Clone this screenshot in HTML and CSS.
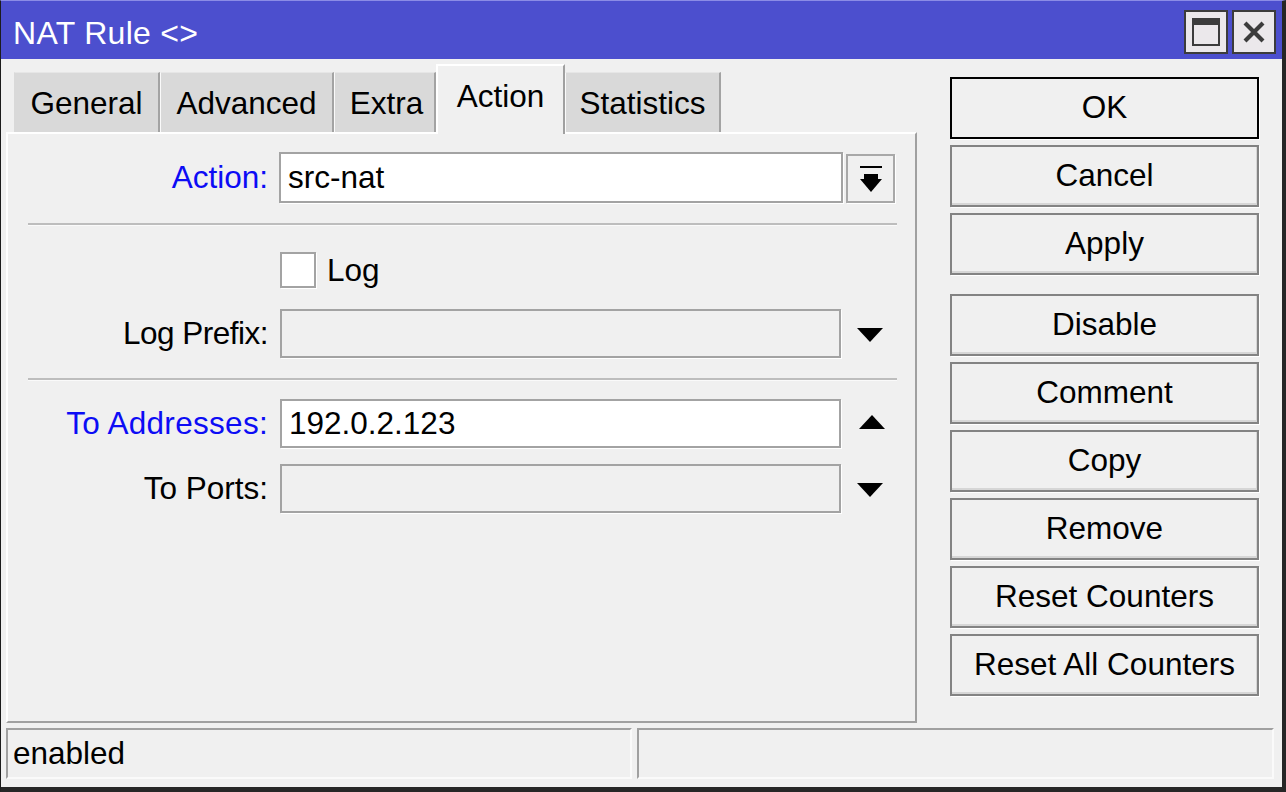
FILE: index.html
```html
<!DOCTYPE html>
<html>
<head>
<meta charset="utf-8">
<title>NAT Rule</title>
<link rel="stylesheet" href="styles.css">
</head>
<body>
<div class="window">
  <div class="titlebar">
    <div class="title">NAT Rule &lt;&gt;</div>
    <div class="tbtns">
      <div class="tbtn">
        <svg width="28" height="28" viewBox="0 0 28 28"><rect x="0" y="0" width="28" height="28" fill="#3c3c3c"/><rect x="2" y="7" width="24" height="19" fill="#ebe8eb"/></svg>
      </div>
      <div class="tbtn">
        <svg width="22" height="22" viewBox="0 0 22 22"><path d="M2 2 L20 20 M20 2 L2 20" stroke="#3c3c3c" stroke-width="4.2" fill="none"/></svg>
      </div>
    </div>
  </div>
  <div class="main">
    <div class="leftpane">
      <div class="tabs">
        <div class="tab w-general">General</div>
        <div class="tab w-advanced">Advanced</div>
        <div class="tab w-extra">Extra</div>
        <div class="tab active w-action">Action</div>
        <div class="tab w-stats">Statistics</div>
      </div>
      <div class="panel">
        <div class="row r-action">
          <div class="label blue">Action:</div>
          <div class="input wide white">src-nat</div>
          <div class="ddbtn">
            <svg width="22" height="26" viewBox="0 0 22 26"><rect x="0" y="0" width="22" height="2" fill="#000"/><rect x="4" y="8" width="14" height="6" fill="#000"/><polygon points="0,13 22,13 11,26" fill="#000"/></svg>
          </div>
        </div>
        <div class="sep s1"></div>
        <div class="row r-log">
          <div class="label"></div>
          <div class="checkbox"></div>
          <div class="cblabel">Log</div>
        </div>
        <div class="row r-prefix">
          <div class="label">Log Prefix:</div>
          <div class="input"></div>
          <div class="arrow"><svg width="26" height="14" viewBox="0 0 26 14"><polygon points="0,0 26,0 13,14" fill="#000"/></svg></div>
        </div>
        <div class="sep s2"></div>
        <div class="row r-addr">
          <div class="label blue">To Addresses:</div>
          <div class="input white">192.0.2.123</div>
          <div class="arrow up"><svg width="26" height="14" viewBox="0 0 26 14"><polygon points="0,14 26,14 13,0" fill="#000"/></svg></div>
        </div>
        <div class="row r-ports">
          <div class="label">To Ports:</div>
          <div class="input"></div>
          <div class="arrow"><svg width="26" height="14" viewBox="0 0 26 14"><polygon points="0,0 26,0 13,14" fill="#000"/></svg></div>
        </div>
      </div>
    </div>
    <div class="buttons">
      <div class="btn default">OK</div>
      <div class="btn">Cancel</div>
      <div class="btn">Apply</div>
      <div class="btn gap">Disable</div>
      <div class="btn">Comment</div>
      <div class="btn">Copy</div>
      <div class="btn">Remove</div>
      <div class="btn">Reset Counters</div>
      <div class="btn">Reset All Counters</div>
    </div>
  </div>
  <div class="statusbar">
    <div class="status s-left">enabled</div>
    <div class="status s-right"></div>
  </div>
</div>
</body>
</html>
```

FILE: styles.css
```css
html, body {
  margin: 0;
  padding: 0;
  background: #2a2a2a;
}
body {
  font-family: "Liberation Sans", Arial, sans-serif;
  font-size: 31.5px;
  color: #000;
}
.window {
  box-sizing: border-box;
  width: 1286px;
  height: 792px;
  background: #f0f0f0;
  border-left: 1px solid #1c1c1c;
  border-top: 1px solid #8b8ce6;
  border-right: 4px solid #262626;
  border-bottom: 5px solid #262626;
  display: flex;
  flex-direction: column;
}
.titlebar {
  height: 58px;
  background: #4c4fce;
  display: flex;
  align-items: flex-start;
  flex-shrink: 0;
}
.title {
  color: #fff;
  padding-left: 12px;
  margin-top: 14px;
  line-height: 36px;
  font-size: 32px;
  letter-spacing: 0.3px;
}
.tbtns {
  margin-left: auto;
  display: flex;
  gap: 4px;
  margin-top: 9px;
  margin-right: 6px;
}
.tbtn {
  box-sizing: border-box;
  width: 44px;
  height: 44px;
  background: #ebe8eb;
  border: 2px solid #3c3c3c;
  display: flex;
  align-items: center;
  justify-content: center;
}
.main {
  display: flex;
  height: 664px;
  flex-shrink: 0;
}
.leftpane {
  padding-left: 5px;
  width: 911px;
}
.tabs {
  height: 73px;
  padding-left: 8px;
  display: flex;
  align-items: flex-end;
  position: relative;
  z-index: 2;
}
.tab {
  box-sizing: border-box;
  height: 60px;
  background: #d9d9d9;
  border-left: 1px solid #fafafa;
  border-top: 1px solid #e6e6e6;
  border-right: 2px solid #a3a3a3;
  display: flex;
  align-items: center;
  justify-content: center;
  padding-top: 1px;
  white-space: nowrap;
}
.tab.active {
  height: 70px;
  margin-bottom: -2px;
  background: #f0f0f0;
  border-left: 2px solid #fff;
  border-top: 2px solid #fff;
  border-right: 2px solid #a0a0a0;
  padding-bottom: 8px;
}
.w-general { width: 146px; border-left-color: #d9d9d9; }
.w-advanced { width: 174px; }
.w-extra { width: 102px; padding-left: 4px; }
.w-action { width: 129px; }
.w-stats { width: 156px; }
.panel {
  box-sizing: border-box;
  width: 911px;
  height: 591px;
  border-top: 2px solid #fff;
  border-left: 2px solid #fff;
  border-right: 2px solid #a0a0a0;
  border-bottom: 2px solid #a0a0a0;
  position: relative;
  z-index: 1;
}
.row {
  display: flex;
  align-items: center;
}
.label {
  width: 260px;
  padding-right: 2px;
  text-align: right;
  white-space: nowrap;
  flex-shrink: 0;
}
.blue { color: #0c0cf5; }
.input {
  box-sizing: border-box;
  margin-left: 10px;
  width: 561px;
  height: 49px;
  border: 2px solid #a3a3a3;
  box-shadow: 1px 1px 0 #fff;
  background: #f0f0f0;
  padding-left: 7px;
  display: flex;
  align-items: center;
  white-space: nowrap;
}
.input.white { background: #fff; }
.input.wide {
  margin-left: 9px;
  width: 564px;
  height: 51px;
}
.r-action { margin-top: 18px; align-items: flex-end; }
.r-action .label { align-self: center; }
.ddbtn {
  box-sizing: border-box;
  margin-left: 3px;
  width: 49px;
  height: 49px;
  border: 2px solid #a8a8a8;
  box-shadow: 1px 1px 0 #fff;
  display: flex;
  align-items: center;
  justify-content: center;
  padding-left: 1px;
}
.sep {
  margin-left: 20px;
  width: 869px;
  height: 2px;
  background: #bdbdbd;
  border-bottom: 1px solid #fafafa;
}
.s1 { margin-top: 20px; }
.s2 { margin-top: 20px; }
.r-log { margin-top: 26px; }
.checkbox {
  box-sizing: border-box;
  margin-left: 10px;
  width: 36px;
  height: 36px;
  background: #fff;
  border: 2px solid #a3a3a3;
  box-shadow: 1px 1px 0 #fff;
}
.cblabel { margin-left: 11px; line-height: 36px; }
.r-prefix { margin-top: 21px; }
.r-prefix .label { letter-spacing: -0.5px; }
.r-addr .label { letter-spacing: 0.3px; }
.arrow {
  width: 49px;
  margin-left: 4px;
  display: flex;
  justify-content: center;
  padding-top: 3px;
}
.arrow.up { padding-left: 4px; width: 45px; padding-top: 0; margin-top: -3px; }
.r-addr { margin-top: 18px; }
.r-ports { margin-top: 16px; }
.buttons {
  margin-left: 33px;
  padding-top: 18px;
  width: 309px;
  display: flex;
  flex-direction: column;
  gap: 6px;
}
.btn {
  box-sizing: border-box;
  height: 62px;
  border: 2px solid #838383;
  box-shadow: inset -1px -2px 0 #d6d6d6, 1px 1px 0 #fff;
  background: #f0f0f0;
  display: flex;
  align-items: center;
  justify-content: center;
  white-space: nowrap;
  padding-bottom: 2px;
}
.btn.default {
  border-color: #000;
  box-shadow: 1px 1px 0 #fff;
}
.btn.gap { margin-top: 13px; }
.statusbar {
  display: flex;
  gap: 5px;
  padding-left: 5px;
  margin-top: 5px;
  height: 51px;
  flex-shrink: 0;
}
.status {
  box-sizing: border-box;
  height: 51px;
  border-top: 2px solid #a0a0a0;
  border-left: 2px solid #a0a0a0;
  border-right: 2px solid #fafafa;
  border-bottom: 2px solid #fafafa;
  display: flex;
  align-items: center;
  padding-left: 5px;
}
.s-left { width: 626px; }
.s-right { width: 637px; }
```
